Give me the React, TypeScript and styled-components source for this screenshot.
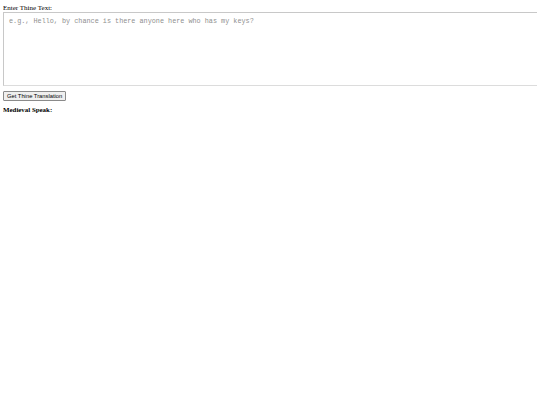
import React from 'react';
import styled, { createGlobalStyle } from 'styled-components';

const GlobalStyle = createGlobalStyle`
  html, body {
    overflow: hidden;
  }
  body {
    margin: 3px;
    background: #ffffff;
    font-family: "Liberation Serif", "Times New Roman", serif;
    color: #000000;
  }
`;

const Page = styled.div`
  display: flex;
  flex-direction: column;
  align-items: flex-start;
  width: 580px;
`;

const Label = styled.label`
  font-size: 7px;
  line-height: 8px;
  margin-top: 1px;
`;

const TextBox = styled.textarea`
  box-sizing: border-box;
  width: 580px;
  min-width: 580px;
  height: 74px;
  margin: 0;
  padding: 4px 5px;
  border: 1px solid #c8c8c8;
  border-bottom-color: #dcdcdc;
  font-family: "Liberation Mono", "Courier New", monospace;
  font-size: 6.8px;
  line-height: 8px;
  resize: none;
  outline: none;

  &::placeholder {
    color: #8f8f8f;
  }
`;

const Button = styled.button`
  margin-top: 5px;
  height: 10px;
  padding: 0 3px;
  font-family: "Liberation Sans", Arial, sans-serif;
  font-size: 5.8px;
  color: #000000;
  background: #efefef;
  border: 1px solid #8a8a8a;
  border-radius: 1px;
  line-height: 8px;
`;

const ResultTitle = styled.h3`
  margin: 5px 0 0;
  font-size: 6.9px;
  line-height: 8px;
  font-weight: bold;
`;

export default function App() {
  return (
    <>
      <GlobalStyle />
      <Page>
        <Label htmlFor="thine-text">Enter Thine Text:</Label>
        <TextBox
          id="thine-text"
          placeholder="e.g., Hello, by chance is there anyone here who has my keys?"
        />
        <Button type="button">Get Thine Translation</Button>
        <ResultTitle>Medieval Speak:</ResultTitle>
      </Page>
    </>
  );
}
